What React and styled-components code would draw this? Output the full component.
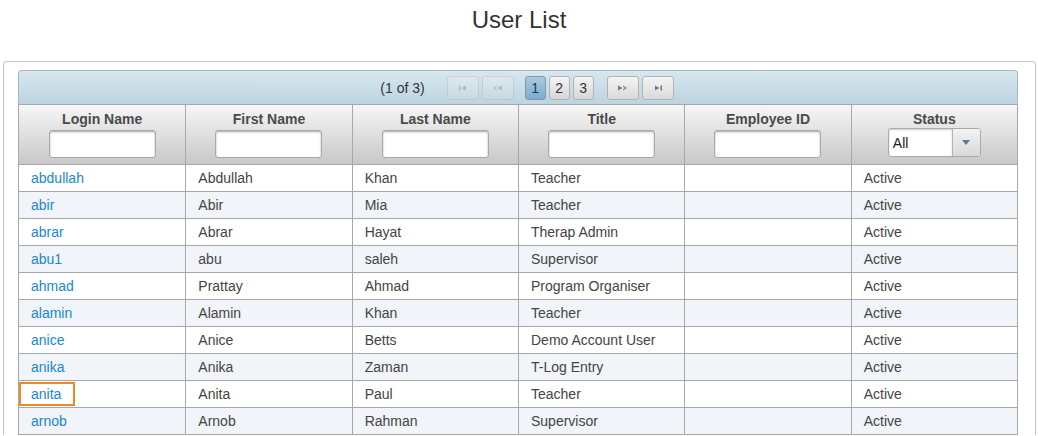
import React from "react";
import styled, { createGlobalStyle } from "styled-components";

const GlobalStyle = createGlobalStyle`
  body {
    margin: 0;
    background: #fff;
    font-family: "Liberation Sans", Arial, sans-serif;
    color: #333;
  }
`;

const users = [
  ["abdullah", "Abdullah", "Khan", "Teacher", "", "Active"],
  ["abir", "Abir", "Mia", "Teacher", "", "Active"],
  ["abrar", "Abrar", "Hayat", "Therap Admin", "", "Active"],
  ["abu1", "abu", "saleh", "Supervisor", "", "Active"],
  ["ahmad", "Prattay", "Ahmad", "Program Organiser", "", "Active"],
  ["alamin", "Alamin", "Khan", "Teacher", "", "Active"],
  ["anice", "Anice", "Betts", "Demo Account User", "", "Active"],
  ["anika", "Anika", "Zaman", "T-Log Entry", "", "Active"],
  ["anita", "Anita", "Paul", "Teacher", "", "Active"],
  ["arnob", "Arnob", "Rahman", "Supervisor", "", "Active"],
];

const columns = ["Login Name", "First Name", "Last Name", "Title", "Employee ID"];

const Icon = ({ type }) => {
  const c = "#6a7d8c";
  if (type === "first")
    return (
      <svg width="10" height="6" viewBox="0 0 10 6">
        <rect x="1" y="0.5" width="1.5" height="5" fill={c} />
        <path d="M3.5 3 L8 0.5 L8 5.5 Z" fill={c} />
      </svg>
    );
  if (type === "prev")
    return (
      <svg width="11" height="6" viewBox="0 0 11 6">
        <path d="M1 3 L5 0.5 L5 1.6 L2.8 3 L5 4.4 L5 5.5 Z" fill={c} />
        <path d="M5.5 3 L10 0.5 L10 5.5 Z" fill={c} />
      </svg>
    );
  if (type === "next")
    return (
      <svg width="11" height="6" viewBox="0 0 11 6">
        <path d="M1 0.5 L5.5 3 L1 5.5 Z" fill={c} />
        <path d="M6 0.5 L10 3 L6 5.5 L6 4.4 L8.2 3 L6 1.6 Z" fill={c} />
      </svg>
    );
  return (
    <svg width="10" height="6" viewBox="0 0 10 6">
      <path d="M2 0.5 L6.5 3 L2 5.5 Z" fill={c} />
      <rect x="7.5" y="0.5" width="1.5" height="5" fill={c} />
    </svg>
  );
};

const App = () => (
  <>
    <GlobalStyle />
    <Title>User List</Title>
    <Panel>
      <Table>
        <Paginator>
          <PageInfo>(1 of 3)</PageInfo>
          <NavButton disabled>
            <Icon type="first" />
          </NavButton>
          <NavButton disabled>
            <Icon type="prev" />
          </NavButton>
          <Pages>
            <PageButton active>1</PageButton>
            <PageButton>2</PageButton>
            <PageButton>3</PageButton>
          </Pages>
          <NavButton>
            <Icon type="next" />
          </NavButton>
          <NavButton>
            <Icon type="last" />
          </NavButton>
        </Paginator>
        <HeaderRow>
          {columns.map((col) => (
            <HeaderCell key={col}>
              <HeaderLabel>{col}</HeaderLabel>
              <FilterInput />
            </HeaderCell>
          ))}
          <HeaderCell>
            <HeaderLabel>Status</HeaderLabel>
            <StatusSelect>
              <SelectValue>All</SelectValue>
              <SelectTrigger>
                <svg width="8" height="5" viewBox="0 0 8 5">
                  <path d="M0 0 L8 0 L4 5 Z" fill="#5c7a92" />
                </svg>
              </SelectTrigger>
            </StatusSelect>
          </HeaderCell>
        </HeaderRow>
        {users.map((u, i) => (
          <Row key={u[0]} alt={i % 2 === 1}>
            <Cell>
              <UserLink focused={u[0] === "anita"}>{u[0]}</UserLink>
            </Cell>
            {u.slice(1).map((v, j) => (
              <Cell key={j}>{v}</Cell>
            ))}
          </Row>
        ))}
      </Table>
    </Panel>
  </>
);

const Title = styled.h1`
  margin: 0;
  height: 41px;
  padding-top: 7px;
  box-sizing: border-box;
  text-align: center;
  font-family: "Liberation Sans", Arial, sans-serif;
  font-weight: normal;
  font-size: 24px;
  line-height: 26px;
  color: #333;
`;

const Panel = styled.div`
  margin: 20px 2px 0 3px;
  border: 1px solid #c4c4c4;
  border-bottom: none;
  border-radius: 4px 4px 0 0;
  padding: 8px 16px 0 14px;
`;

const Table = styled.div`
  width: 1000px;
  font-size: 14px;
`;

const Paginator = styled.div`
  height: 34px;
  border: 1px solid #a8b8c4;
  border-bottom: none;
  border-radius: 4px 4px 0 0;
  background: linear-gradient(#d8e7ef, #bcd4e1);
  display: flex;
  align-items: center;
  justify-content: center;
  gap: 3px;
  padding-left: 18px;
  box-sizing: border-box;
`;

const PageInfo = styled.span`
  color: #333;
  font-size: 14px;
  margin-right: 19px;
`;

const btnBase = `
  height: 24px;
  box-sizing: border-box;
  border: 1px solid #b3b3b3;
  border-radius: 3px;
  display: flex;
  align-items: center;
  justify-content: center;
  font-family: "Liberation Sans", Arial, sans-serif;
`;

const NavButton = styled.div`
  ${btnBase}
  width: 32px;
  background: linear-gradient(#f4f4f4, #dadada);
  opacity: ${(p) => (p.disabled ? 0.35 : 1)};
`;

const Pages = styled.div`
  display: flex;
  gap: 3px;
  margin: 0 10px 0 8px;
`;

const PageButton = styled.div`
  ${btnBase}
  width: 21px;
  font-size: 14px;
  color: ${(p) => (p.active ? "#1d3a52" : "#333")};
  border-color: ${(p) => (p.active ? "#7c9ab0" : "#b3b3b3")};
  background: ${(p) =>
    p.active
      ? "linear-gradient(#a9cbe0, #7eacc9)"
      : "linear-gradient(#f4f4f4, #d6d6d6)"};
`;

const grid = `
  display: grid;
  grid-template-columns: repeat(6, 1fr);
  box-sizing: border-box;
`;

const HeaderRow = styled.div`
  ${grid}
  height: 61px;
  border: 1px solid #a8a8a8;
  background: linear-gradient(#f6f6f6, #c8c8c8);
`;

const HeaderCell = styled.div`
  display: flex;
  flex-direction: column;
  align-items: center;
  padding-top: 6px;
  & + & {
    border-left: 1px solid #a8a8a8;
  }
`;

const HeaderLabel = styled.div`
  font-weight: bold;
  font-size: 14px;
  color: #4a4a4a;
  line-height: 16px;
  height: 17px;
`;

const FilterInput = styled.input`
  margin-top: 2px;
  width: 107px;
  height: 28px;
  box-sizing: border-box;
  border: 1px solid #a9a9a9;
  border-radius: 3px;
  background: #fff;
  box-shadow: inset 0 1px 2px rgba(0, 0, 0, 0.35);
  outline: none;
`;

const StatusSelect = styled.div`
  width: 93px;
  height: 29px;
  box-sizing: border-box;
  border: 1px solid #a9a9a9;
  border-radius: 3px;
  background: #fff;
  display: flex;
  overflow: hidden;
`;

const SelectValue = styled.div`
  flex: 1;
  padding: 6px 0 0 4px;
  font-size: 14px;
  color: #222;
  box-shadow: inset 0 1px 2px rgba(0, 0, 0, 0.2);
`;

const SelectTrigger = styled.div`
  width: 27px;
  border-left: 1px solid #b3b3b3;
  background: linear-gradient(#f3f3f3, #d9d9d9);
  display: flex;
  align-items: center;
  justify-content: center;
`;

const Row = styled.div`
  ${grid}
  height: 27px;
  border: 1px solid #a8a8a8;
  border-top: none;
  background: ${(p) => (p.alt ? "#f1f4f8" : "#fff")};
`;

const Cell = styled.div`
  padding: 0 12px;
  display: flex;
  align-items: center;
  color: #444;
  font-size: 14px;
  white-space: nowrap;
  & + & {
    border-left: 1px solid #a8a8a8;
  }
`;

const UserLink = styled.a`
  color: #1a87cf;
  text-decoration: none;
  cursor: pointer;
  ${(p) =>
    p.focused &&
    `
    margin-left: -12px;
    padding: 2px 12px 2px 10px;
    border: 2px solid #f0882a;
  `}
`;

export default App;
